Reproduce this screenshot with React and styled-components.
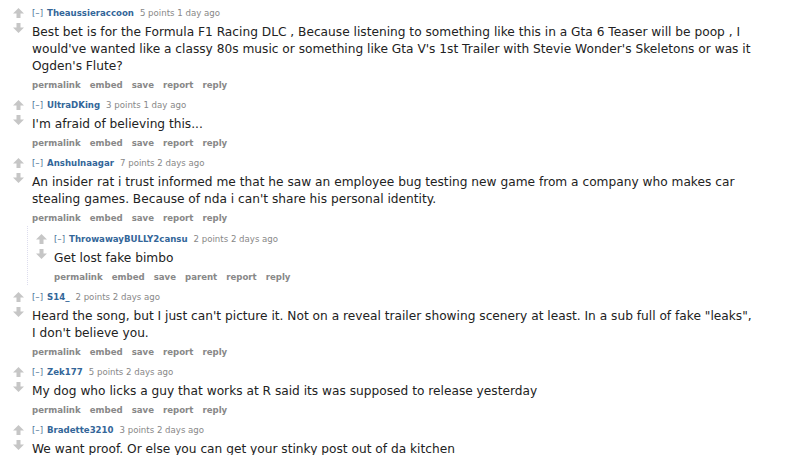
import React from 'react';
import styled, {createGlobalStyle} from 'styled-components';

const comments = [
  {
    id: 1,
    author: 'Theaussieraccoon',
    points: 5,
    age: '1 day ago',
    body: "Best bet is for the Formula F1 Racing DLC , Because listening to something like this in a Gta 6 Teaser will be poop , I would've wanted like a classy 80s music or something like Gta V's 1st Trailer with Stevie Wonder's Skeletons or was it Ogden's Flute?",
  },
  {
    id: 2,
    author: 'UltraDKing',
    points: 3,
    age: '1 day ago',
    body: "I'm afraid of believing this...",
  },
  {
    id: 3,
    author: 'Anshulnaagar',
    points: 7,
    age: '2 days ago',
    body: "An insider rat i trust informed me that he saw an employee bug testing new game from a company who makes car stealing games. Because of nda i can't share his personal identity.",
    replies: [
      {
        id: 31,
        author: 'ThrowawayBULLY2cansu',
        points: 2,
        age: '2 days ago',
        body: 'Get lost fake bimbo',
      },
    ],
  },
  {
    id: 4,
    author: 'S14_',
    points: 2,
    age: '2 days ago',
    body: 'Heard the song, but I just can\'t picture it. Not on a reveal trailer showing scenery at least. In a sub full of fake "leaks", I don\'t believe you.',
  },
  {
    id: 5,
    author: 'Zek177',
    points: 5,
    age: '2 days ago',
    body: 'My dog who licks a guy that works at R said its was supposed to release yesterday',
  },
  {
    id: 6,
    author: 'Bradette3210',
    points: 3,
    age: '2 days ago',
    body: 'We want proof. Or else you can get your stinky post out of da kitchen',
  },
];

//vote arrows
const Arrow = ({down}) => (
  <svg width="11" height="10" viewBox="0 0 11 10">
    <polygon
      points="5.5,0 11,5.5 7.5,5.5 7.5,10 3.5,10 3.5,5.5 0,5.5"
      fill="#c6c6c6"
      transform={down ? 'rotate(180 5.5 5)' : undefined}
    />
  </svg>
);

const Comment = ({comment, nested}) => {
  const buttons = nested
    ? ['permalink', 'embed', 'save', 'parent', 'report', 'reply']
    : ['permalink', 'embed', 'save', 'report', 'reply'];

  return (
    <CommentBox>
      <Row>
        <Votes $nested={nested}>
          <Arrow />
          <Arrow down />
        </Votes>
        <Entry>
          <Tagline>
            <Expand>[–]</Expand>
            <Author>{comment.author}</Author>
            {comment.points} points {comment.age}
          </Tagline>
          <Body>{comment.body}</Body>
          <Buttons>
            {buttons.map((b) => (
              <li key={b}>{b}</li>
            ))}
          </Buttons>
        </Entry>
      </Row>
      {comment.replies && (
        <Children>
          {comment.replies.map((r) => (
            <Comment comment={r} nested key={r.id} />
          ))}
        </Children>
      )}
    </CommentBox>
  );
};

const App = () => {
  return (
    <>
      <GlobalStyle />
      <Thread>
        {comments.map((c) => (
          <Comment comment={c} key={c.id} />
        ))}
      </Thread>
    </>
  );
};

const GlobalStyle = createGlobalStyle`
  body {
    margin: 0;
    background: #fff;
    font-family: 'DejaVu Sans', Verdana, sans-serif;
  }
`;

const Thread = styled.div`
  padding: 1px 0 0 13px;
  height: 455px;
  box-sizing: border-box;
  overflow: hidden;
`;

const CommentBox = styled.div`
  margin-top: 4px;
`;

const Row = styled.div`
  display: flex;
`;

const Votes = styled.div`
  flex: 0 0 ${(p) => (p.$nested ? '18px' : '19px')};
  display: flex;
  flex-direction: column;
  gap: 5px;
  padding-top: 3px;
  svg {
    display: block;
  }
`;

const Entry = styled.div`
  flex: 1;
  min-width: 0;
`;

const Tagline = styled.div`
  font-size: 8.6px;
  line-height: 16px;
  color: #888;
  white-space: nowrap;
`;

const Expand = styled.span`
  color: #4f7399;
  margin-right: 4px;
`;

const Author = styled.span`
  color: #369;
  font-weight: bold;
  margin-right: 6px;
`;

const Body = styled.div`
  font-size: 12.2px;
  line-height: 17px;
  color: #222;
  margin: 3px 0 2px;
  max-width: 723px;
`;

const Buttons = styled.ul`
  display: flex;
  gap: 9px;
  list-style: none;
  margin: 0;
  padding: 0;
  font-size: 8.6px;
  line-height: 16px;
  font-weight: bold;
  color: #888;
`;

const Children = styled.div`
  margin-left: 14px;
  padding: 1px 0 0 8px;
  border-left: 1px dotted #dde;
`;

export default App;
